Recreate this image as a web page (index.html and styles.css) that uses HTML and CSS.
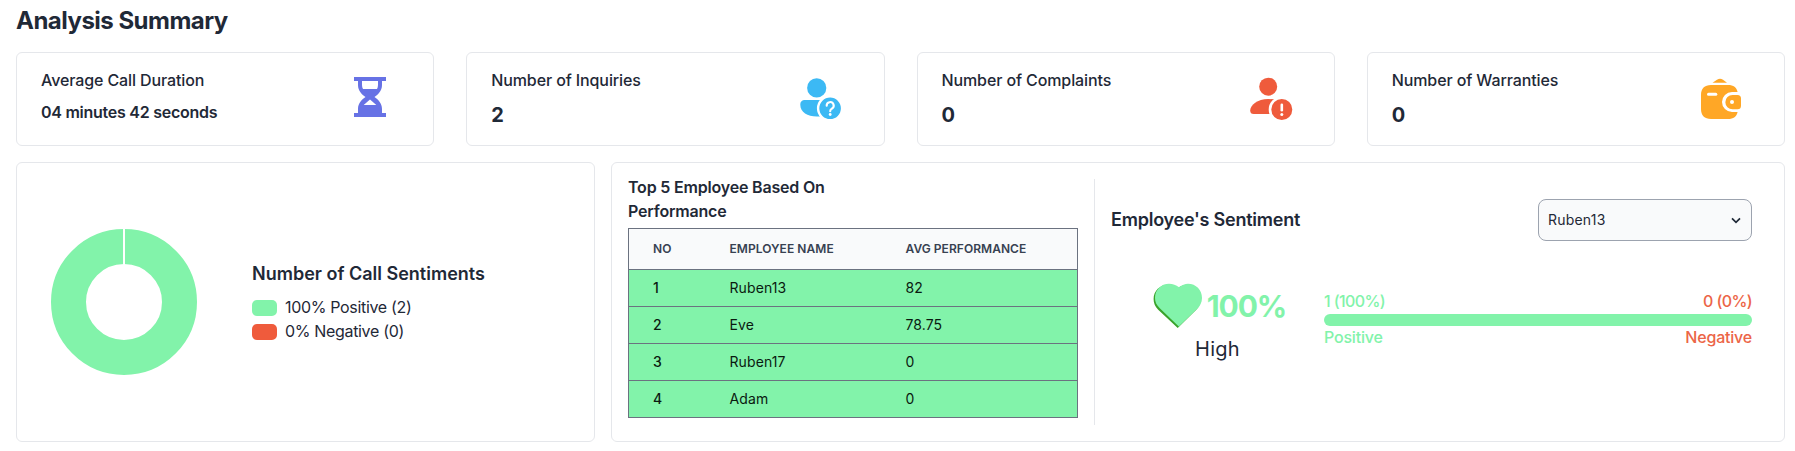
FILE: index.html
```html
<!DOCTYPE html>
<html lang="en">
<head>
<meta charset="utf-8">
<title>Analysis Summary</title>
<link rel="stylesheet" href="styles.css">
</head>
<body>
<main class="page">
  <h1 class="page-title">Analysis Summary</h1>

  <section class="stats">
    <article class="card stat">
      <div>
        <p class="stat-label">Average Call Duration</p>
        <p class="stat-value stat-value-sm">04 minutes 42 seconds</p>
      </div>
      <svg class="stat-icon" viewBox="0 0 48 48">
        <path fill="#6772e5" fill-rule="evenodd" d="M8 4H40V8H36V12C36 18 32 21.500 28.500 24C32 26.500 36 30 36 36V40H40V44H8V40H12V36C12 30 16 26.500 19.500 24C16 21.500 12 18 12 12V8H8ZM16 8V12C16 13.600 16.400 14.900 17 16H31C31.600 14.900 32 13.600 32 12V8ZM24 26.500L17.700 32H30.300Z"/>
      </svg>
    </article>
    <article class="card stat">
      <div>
        <p class="stat-label">Number of Inquiries</p>
        <p class="stat-value">2</p>
      </div>
      <svg class="stat-icon" viewBox="0.500 0.400 48 48">
        <g fill="#3cb9f4">
          <circle cx="20.200" cy="15.300" r="9.600"/>
          <path d="M8 27.300H32.400A4 4 0 0 1 36.400 31.300C36.400 39.500 29 44 20.200 44C11 44 3.800 39.500 3.800 32.500V31.500A4.200 4.200 0 0 1 8 27.300Z"/>
          <circle cx="33.600" cy="35.700" r="12" stroke="#fff" stroke-width="2.400"/>
        </g>
        <path d="M30.200 33.200A3.500 3.500 0 1 1 35.300 36.100Q33.700 37 33.700 38.700" fill="none" stroke="#fff" stroke-width="2.100" stroke-linecap="round"/>
        <circle cx="33.700" cy="41.900" r="1.400" fill="#fff"/>
      </svg>
    </article>
    <article class="card stat">
      <div>
        <p class="stat-label">Number of Complaints</p>
        <p class="stat-value">0</p>
      </div>
      <svg class="stat-icon" viewBox="0 0 48 48">
        <g fill="#ef5b3c">
          <circle cx="21.200" cy="13.700" r="9"/>
          <path d="M21.200 26C10.500 26 3.200 32 3.200 37.500A3.500 3.500 0 0 0 6.700 41H30V27Q26 26 21.200 26Z"/>
          <circle cx="34.800" cy="36.500" r="11.800" stroke="#fff" stroke-width="2.600"/>
        </g>
        <path d="M34.800 31.800V37.200" fill="none" stroke="#fff" stroke-width="2.600" stroke-linecap="round"/>
        <circle cx="34.800" cy="41.400" r="1.500" fill="#fff"/>
      </svg>
    </article>
    <article class="card stat">
      <div>
        <p class="stat-label">Number of Warranties</p>
        <p class="stat-value">0</p>
      </div>
      <svg class="stat-icon" viewBox="0 0 48 48">
        <path fill="#ffa726" d="M15.500 9.700L20 6.700Q23 4.700 26 6.700L30 9.700Z"/>
        <path fill="#ffa726" d="M14 12H31C36.500 12 39.700 14.500 40.600 19H35A10 10 0 0 0 35 39H40.600C39.700 43.500 36.500 46 31 46H14C7.500 46 4 42.500 4 36V22C4 15.500 7.500 12 14 12Z"/>
        <path fill="#ffa726" d="M35.500 22H40.500Q44 22 44 25.500V32.800Q44 36.300 40.500 36.300H35.500A7.150 7.150 0 0 1 35.500 22Z"/>
        <path d="M11.500 21.300H18.800" stroke="#fff" stroke-width="3" stroke-linecap="round"/>
        <circle cx="35" cy="29.100" r="2" fill="#fff"/>
      </svg>
    </article>
  </section>

  <section class="panels">
    <article class="card calls">
      <svg class="donut" viewBox="0 0 146 146">
        <circle cx="73" cy="73" r="55.500" fill="none" stroke="#82f3aa" stroke-width="35"/>
        <path d="M73 0V38" stroke="#fff" stroke-width="2"/>
      </svg>
      <div>
        <h2 class="calls-title">Number of Call Sentiments</h2>
        <p class="legend"><span class="swatch swatch-positive"></span><span class="legend-text">100% Positive (2)</span></p>
        <p class="legend"><span class="swatch swatch-negative"></span><span class="legend-text">0% Negative (0)</span></p>
      </div>
    </article>

    <article class="card employees">
      <div class="ranking">
        <h2 class="ranking-title">Top 5 Employee Based On Performance</h2>
        <table class="table">
          <thead>
            <tr><th class="col-no">NO</th><th class="col-name">EMPLOYEE NAME</th><th>AVG PERFORMANCE</th></tr>
          </thead>
          <tbody>
            <tr><td class="rank">1</td><td>Ruben13</td><td>82</td></tr>
            <tr><td class="rank">2</td><td>Eve</td><td>78.75</td></tr>
            <tr><td class="rank">3</td><td>Ruben17</td><td>0</td></tr>
            <tr><td class="rank">4</td><td>Adam</td><td>0</td></tr>
          </tbody>
        </table>
      </div>

      <div class="sentiment">
        <header class="sentiment-head">
          <h2 class="sentiment-title">Employee's Sentiment</h2>
          <div class="picker">
            <span>Ruben13</span>
            <svg class="chevron" viewBox="0 0 10 7"><path d="M1 1.300L5 5.300L9 1.300" fill="none" stroke="#1f2937" stroke-width="1.700"/></svg>
          </div>
        </header>
        <div class="sentiment-body">
          <div class="score">
            <div class="score-row">
              <svg class="heart" viewBox="0 0 50 46">
                <path fill="#3aa32b" d="M24.700 5.300C27.700 3 31 1.800 34 1.800C42 1.800 47.500 8 47.500 16C47.500 20.500 46 24 43 27L24.700 44.900L5.200 26.800C2 23.500 .600 20 .600 16C.600 8 7 1.800 15 1.800Z"/>
                <path fill="#82f3aa" d="M26 4.300C29 2 32 .800 35 .800C43 .800 49 7 49 15C49 19.500 47 23 44 26L25.800 43.600L6.800 25.300C3.500 22 2 19 2 15C2 7 8 .800 16 .800C20 .800 23 2 26 4.300Z"/>
              </svg>
              <span class="score-value">100%</span>
            </div>
            <p class="score-level">High</p>
          </div>
          <div class="meter">
            <div class="meter-row meter-counts"><span class="positive">1 (100%)</span><span class="negative">0 (0%)</span></div>
            <div class="track"><div class="fill" style="width:100%"></div></div>
            <div class="meter-row meter-names"><span class="positive">Positive</span><span class="negative">Negative</span></div>
          </div>
        </div>
      </div>
    </article>
  </section>
</main>
</body>
</html>
```
FILE: styles.css
```css
* { box-sizing: border-box; }
body {
  margin: 0;
  background: #fff;
  color: #1f2937;
  font: 400 16px/24px Inter, "Liberation Sans", sans-serif;
}
h1, h2, p { margin: 0; }
svg { display: block; flex: none; }

.page { padding: 5px 10px 0 16px; }
.page-title { font-size: 24px; line-height: 32px; font-weight: 700; letter-spacing: -0.52px; }

.card { border: 1px solid #e5e7eb; border-radius: 6px; background: #fff; }

.stats { display: grid; grid-template-columns: repeat(4, 1fr); gap: 32px; margin-top: 15px; }
.stat { display: flex; justify-content: space-between; height: 94px; padding: 15px 39px 15px 24px; }
.stat-label { font-weight: 500; letter-spacing: -0.11px; }
.stat-value { margin-top: 9px; font-size: 20px; line-height: 28px; font-weight: 700; }
.stat-value-sm { margin-top: 8px; font-size: 16px; line-height: 24px; font-weight: 600; letter-spacing: -0.26px; }
.stat-icon { width: 48px; height: 48px; margin-top: 5px; }

.panels { display: grid; grid-template-columns: 579px 1fr; gap: 16px; margin-top: 16px; height: 280px; }

.calls { display: flex; align-items: center; gap: 55px; padding-left: 34px; }
.donut { width: 146px; height: 146px; }
.calls-title { margin-bottom: 8px; font-size: 18px; line-height: 28px; font-weight: 600; }
.legend { display: flex; align-items: center; gap: 8px; height: 24px; letter-spacing: -0.33px; }
.legend-text { padding-bottom: 2px; }
.swatch { width: 25px; height: 16px; border-radius: 5px; }
.swatch-positive { background: #82f3aa; }
.swatch-negative { background: #ef5b3c; }

.employees { display: flex; }
.ranking { width: 482px; padding: 12px 16px 0; }
.ranking-title { width: 225px; margin-bottom: 5px; font-size: 16px; font-weight: 600; letter-spacing: -0.19px; }
.table { width: 450px; table-layout: fixed; border-collapse: collapse; border: 1px solid #6b7280; text-align: left; }
.table tr { border-bottom: 1px solid #6b7280; }
.table th { padding: 12px 24px; background: #f9fafb; color: #374151; font-size: 12px; line-height: 16px; font-weight: 600; letter-spacing: 0.05px; white-space: nowrap; }
.table td { padding: 8px 24px; background: #82f3aa; color: #0a1a10; font-size: 14px; line-height: 20px; letter-spacing: 0.1px; }
.table .rank { font-weight: 500; }
.col-no { width: 77px; }
.col-name { width: 176px; }

.sentiment { flex: 1; margin: 16px 0; padding: 20px 32px 0 16px; border-left: 1px solid #e5e7eb; }
.sentiment-head { display: flex; justify-content: space-between; align-items: center; }
.sentiment-title { font-size: 18px; line-height: 28px; font-weight: 600; letter-spacing: -0.23px; }
.picker {
  display: flex; justify-content: space-between; align-items: center;
  width: 214px; height: 42px; padding: 0 10px 0 9px;
  border: 1px solid #9ca3af; border-radius: 8px; background: #f9fafb;
  font-size: 14px; line-height: 20px; letter-spacing: 0.2px;
}
.chevron { width: 10px; height: 7px; }
.sentiment-body { display: grid; grid-template-columns: 213px 1fr; margin-top: 42px; }
.score-row { display: flex; justify-content: center; gap: 4px; height: 46px; padding-left: 4px; }
.heart { width: 50px; height: 46px; }
.score-value { margin-top: 5px; color: #82f3aa; font-size: 30px; line-height: 36px; font-weight: 700; letter-spacing: -1.1px; }
.score-level { margin-top: 6px; text-align: center; font-size: 20px; line-height: 28px; letter-spacing: 0.3px; }
.meter { margin-top: 6px; font-weight: 500; letter-spacing: -0.2px; }
.meter-row { display: flex; justify-content: space-between; }
.meter-counts { margin-bottom: 1px; letter-spacing: -0.6px; }
.meter-names { margin-top: -1px; }
.positive { color: #82f3aa; }
.negative { color: #ec6547; }
.track { height: 12px; border-radius: 6px; background: #82f3aa; overflow: hidden; }
.fill { height: 100%; background: #82f3aa; }
```
